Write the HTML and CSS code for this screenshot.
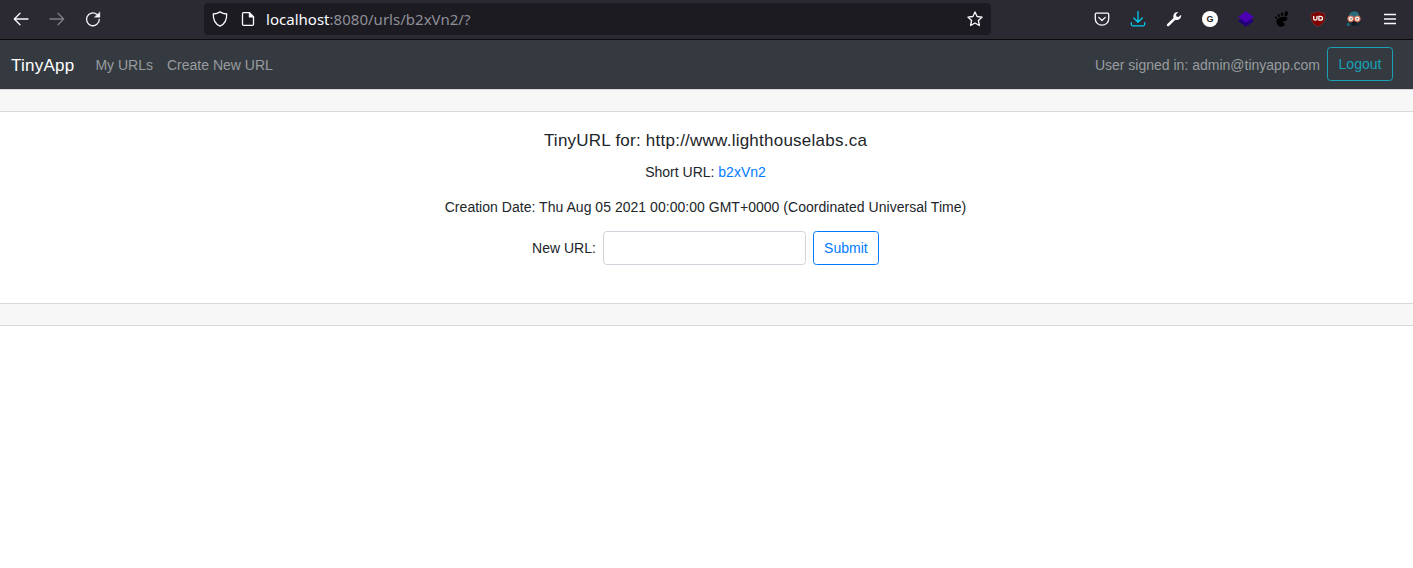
FILE: index.html
```html
<!DOCTYPE html>
<html lang="en">
<head>
<meta charset="utf-8">
<title>TinyApp</title>
<link rel="stylesheet" href="styles.css">
</head>
<body>
<header class="toolbar">
  <div class="nav-icons">
    <svg class="icon" viewBox="0 0 16 16"><path d="M15 8H1.500M7 2.300 1.300 8 7 13.700"/></svg>
    <svg class="icon dim" viewBox="0 0 16 16"><path d="M1 8h13.500M9 2.300 14.700 8 9 13.700"/></svg>
    <svg class="icon" viewBox="0 0 16 16"><path d="M14.300 8.300A6.400 6.400 0 1 1 12 3.400"/><path class="solid" d="M14.900 1.200v5H9.500z"/></svg>
  </div>
  <div class="address">
    <svg class="icon" viewBox="0 0 16 16"><path d="M8 .9c1.800 1.300 4.200 2 6.700 2.100C14.900 8.500 13.500 12.700 8 15.200 2.500 12.700 1.100 8.500 1.300 3 3.800 2.900 6.200 2.200 8 .9z"/></svg>
    <svg class="icon page" viewBox="0 0 16 16"><path d="M3.500 1.700h6l4 4v7.600q0 1-1 1h-9q-1 0-1-1V2.700q0-1 1-1z"/><path class="solid" d="M9 1.500v4.800h4.800z"/></svg>
    <span class="url"><b>localhost</b>:8080/urls/b2xVn2/?</span>
    <svg class="icon star" viewBox="0 0 16 16"><path d="M8 .9 10.100 5.500l5 .6-3.700 3.400 1 5L8 12l-4.400 2.500 1-5L.9 6.100l5-.6z"/></svg>
  </div>
  <div class="extensions">
    <svg class="icon" viewBox="0 0 16 16"><path d="M2.300 2.200h11.400q1 0 1 1V8A6.700 6.200 0 0 1 1.300 8V3.200q0-1 1-1zM4.700 6.400 8 9.500l3.300-3.100"/></svg>
    <svg class="icon download" viewBox="0 0 16 16"><path d="M8 .5V11M3.800 7 8 11.200 12.200 7M1.300 11.700v1.600q0 1.500 1.500 1.500h10.400q1.500 0 1.500-1.500v-1.600"/></svg>
    <svg class="icon" viewBox="0 0 16 16"><path class="fill" d="M1.300 13 7.500 7C6.700 3.700 8.700.7 12.300 1L10 3.500l.4 2.100 2.100.4 2.700-2.300c.3 3.900-2.800 6-6.100 5.200L3 15q-1 .7-1.900 0-.7-1 .2-2z"/></svg>
    <span class="badge">G</span>
    <svg class="icon" viewBox="0 0 16 16"><path fill="#22007b" d="m0 10 8-5.500L16 10l-8 5.800z"/><path fill="#4b00b4" d="M0 5.900 8 .3l8 5.600-8 5.700z"/></svg>
    <svg class="icon" viewBox="0 0 16 16"><g fill="#000"><path fill="#000" d="M13.200 7c.5 2.700-2 3.200-3.400 3.300-1.300.1-1.500.7-.5 1.100 2 .8 1.400 3.800-1.100 4.200C4.500 16 1.800 12.500 2.600 9.700 3.500 6 12.500 4.500 13.200 7z"/><ellipse cx="12.200" cy="2.700" rx="1.800" ry="2.500" transform="rotate(18 12 2.700)"/><ellipse cx="8" cy="3.300" rx="1.100" ry="1.700"/><ellipse cx="4.800" cy="4.500" rx="1" ry="1.500" transform="rotate(-20 5 4.700)"/><ellipse cx="2.100" cy="6.500" rx=".9" ry="1.300" transform="rotate(-35 2.600 6.700)"/></g></svg>
    <svg class="icon" viewBox="0 0 16 16"><path fill="#800000" stroke="#65414a" stroke-width=".7" d="M8 .4q3 1.800 6.900 1.900c.2 6.200.2 10.300-6.900 13.300C.9 12.600.9 8.500 1.100 2.300Q5 2.200 8 .4z"/><path class="ub" d="M3.700 5.500v2.300q0 1.400 1.600 1.400t1.700-1.400V5.500M8.900 5.300v3.900h1.500q2.100 0 2.100-1.950t-2.100-1.950z"/></svg>
    <svg class="icon" viewBox="0 0 16 16"><path fill="#172d36" d="M.3 14.800 3.600 6h9l3.100 8.800-7.500-.5z"/><path fill="#286d7c" d="M2.700 6C3.200 2 5.200.5 8.500.3c3.200.2 4.700 2.200 5 5.700z"/><path fill="#286d7c" d="m.3 14.800 2-4 2 4z"/><path fill="#111820" d="m6 11 2-3 2.500 3-.3 3.500h-4z"/><g fill="#fff0e0" stroke="#d06a58" stroke-width="1.100"><circle cx="4.700" cy="7.800" r="2.800"/><circle cx="11.300" cy="7.800" r="2.800"/></g><g fill="#555"><circle cx="5" cy="7.800" r=".8"/><circle cx="11.200" cy="7.800" r=".8"/></g></svg>
    <svg class="icon menu" viewBox="0 0 16 16"><path d="M2 3.500h12M2 8h12M2 12.500h12"/></svg>
  </div>
</header>
<nav class="navbar">
  <a class="brand">TinyApp</a>
  <a class="nav-link">My URLs</a>
  <a class="nav-link">Create New URL</a>
  <span class="user">User signed in: admin@tinyapp.com</span>
  <button class="btn btn-info">Logout</button>
</nav>
<main>
  <div class="band"></div>
  <section class="content">
    <h1 class="title">TinyURL for: http://www.lighthouselabs.ca</h1>
    <p class="short">Short URL: <a class="link">b2xVn2</a></p>
    <p class="created">Creation Date: Thu Aug 05 2021 00:00:00 GMT+0000 (Coordinated Universal Time)</p>
    <form class="form">
      <label class="label" for="new-url">New URL:</label>
      <input id="new-url" class="field" type="text">
      <button class="btn btn-primary" type="button">Submit</button>
    </form>
  </section>
  <div class="band"></div>
</main>
</body>
</html>
```
FILE: styles.css
```css
* { box-sizing: border-box; }
body {
  margin: 0;
  background: #fff;
  color: #212529;
  font: 14px/21px "Liberation Sans", Arial, sans-serif;
}
.toolbar {
  display: flex;
  align-items: center;
  height: 40px;
  padding-bottom: 1px;
  background: #2b2a33;
  border-bottom: 1px solid #0c0c0d;
}
.icon {
  flex: none;
  width: 16px;
  height: 16px;
  fill: none;
}
.icon path:not([fill]) {
  stroke: #fbfbfe;
  stroke-width: 1.3;
  stroke-linecap: round;
  stroke-linejoin: round;
}
.icon .solid { fill: #fbfbfe; stroke-width: .4 !important; }
.icon .fill { fill: #fbfbfe; stroke: none !important; }
.dim { opacity: .4; }
.icon.download path:not([fill]) { stroke: #00ccf0; }
.icon.menu path:not([fill]) { stroke-width: 1.3; stroke-linecap: butt; }
.icon .ub { stroke: #fff !important; stroke-width: 1.3 !important; }
.nav-icons { display: flex; gap: 20px; width: 204px; padding-left: 13px; }
.address {
  display: flex;
  align-items: center;
  width: 787px;
  height: 32px;
  padding: 0 8px;
  background: #1c1b22;
  border-radius: 4px;
}
.page { margin-left: 12px; }
.url {
  margin-left: 10px;
  color: #8f8f98;
  font: 15px/20px "Noto Sans", sans-serif;
  letter-spacing: .02px;
  white-space: nowrap;
}
.url b { color: #fbfbfe; font-weight: 400; }
.star { margin-left: auto; }
.extensions { display: flex; gap: 20px; margin-left: auto; padding-right: 15px; }
.badge {
  width: 16px;
  height: 16px;
  border-radius: 50%;
  background: #fff;
  color: #222;
  font: bold 9px/16px "Liberation Sans", sans-serif;
  text-align: center;
}
.navbar {
  display: flex;
  align-items: center;
  height: 49px;
  padding: 0 20px 1px 11px;
  background: #343a40;
}
.brand, .nav-link, .user { padding-top: 2px; }
.brand {
  margin-right: 21px;
  padding-top: 3px;
  color: #fff;
  font-size: 17px;
  letter-spacing: .24px;
}
.nav-link { margin-right: 14px; color: #999c9f; }
.user { margin: 0 7px 0 auto; color: #999c9f; }
.btn {
  width: 66px;
  height: 34px;
  padding: 0;
  border: 1px solid;
  border-radius: 3.5px;
  background: transparent;
  font: inherit;
}
.btn-info { color: #17a2b8; }
.btn-primary { padding-top: 1px; color: #007bff; }
.band {
  height: 23px;
  background: #f7f7f7;
  border: solid #d9d9d9;
  border-width: 1px 0;
}
.content {
  display: flex;
  flex-direction: column;
  align-items: center;
  height: 191px;
  padding: 18px 2px 0 0;
}
.title {
  margin: 0 0 10px;
  font-size: 17px;
  font-weight: 400;
  line-height: 22px;
  letter-spacing: .24px;
}
.short { margin: 0 0 14px; }
.created { margin: 0 0 13px; letter-spacing: .03px; }
.form { display: flex; align-items: center; gap: 7px; }
.label { padding-top: 1px; }
.field {
  width: 203px;
  height: 34px;
  border: 1px solid #ced4da;
  border-radius: 3.5px;
  font: inherit;
}
.link { color: #007bff; }
```
